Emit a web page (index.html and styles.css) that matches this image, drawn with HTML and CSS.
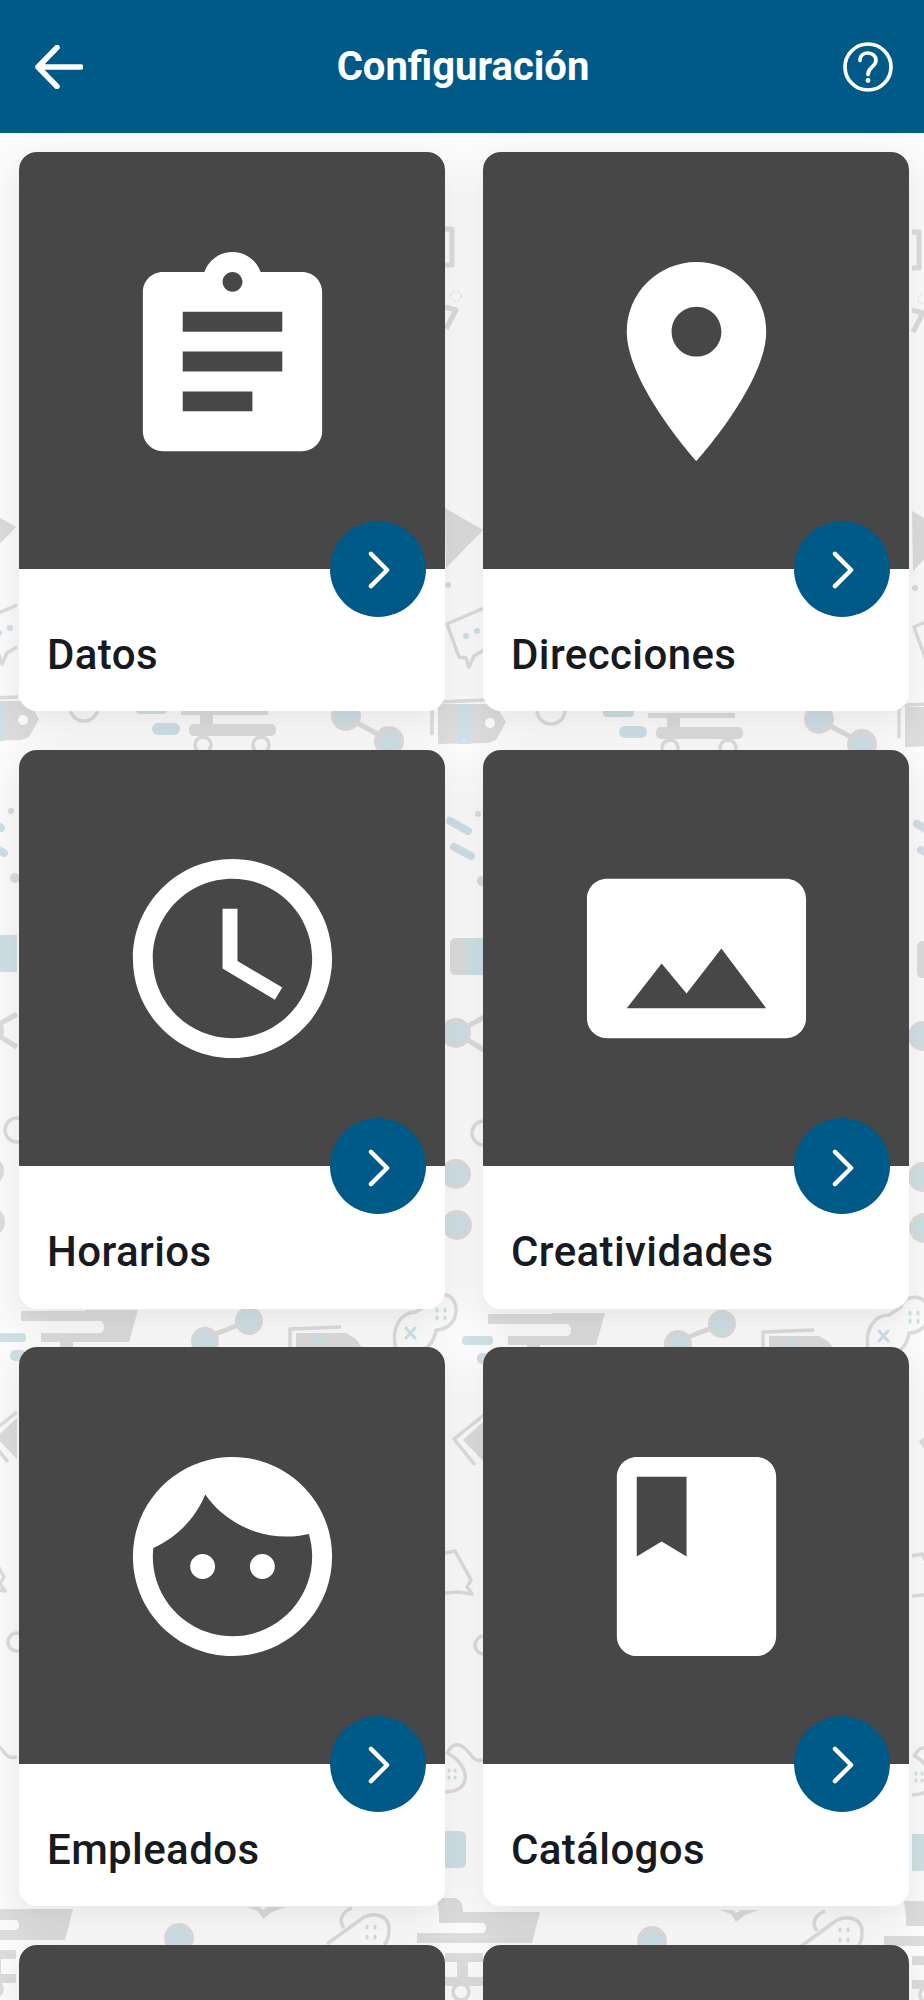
FILE: index.html
```html
<!DOCTYPE html>
<html lang="es">
<head>
  <meta charset="UTF-8" />
  <meta name="viewport" content="width=device-width, initial-scale=1.0" />
  <title>Configuración</title>
  <link rel="stylesheet" href="styles.css">
</head>
<body>
  <!-- Fondo decorativo -->
  <svg class="pattern" viewBox="0 0 924 2000" aria-hidden="true">
    <defs>
      <g id="doodles">
        <g class="fill">
          <path d="M445 508l38 22-37 38z" />
          <circle cx="448" cy="585" r="3" />
          <path d="M438 704h50l9 3 9 15-10 18-8 3-50 1z" />
          <path d="M181 710h87v5h-87zM200 714h13v10h-13z" />
          <rect x="189" y="724" width="87" height="12" rx="5" />
          <circle cx="478" cy="814" r="3" />
          <circle cx="482" cy="881" r="5" />
          <path d="M466 938h-10q-6 0-6 6v25q0 6 6 6h10z" />
          <path d="M21 1311h64v-1h53l-9 32H41v-9h58q5 0 5-6t-5-6H21zM60 1342h13v9H60z" />
          <path d="M484 1421l-21 19 21 22z" />
          <path d="M437 1898h16q10 0 10 14h77l-8 31H417v-10h65q4 0 4-5t-4-5h-43v-10z" />
          <path d="M445 1953h38v9h-15v15h15v9h-38v-9h12v-15h-12z" />
        </g>
        <g class="tint">
          <path d="M458 704h13v40h-13z" />
          <rect x="136" y="705" width="31" height="9" rx="4" />
          <rect x="152" y="723" width="28" height="12" rx="6" />
          <path d="M466 938h18v37h-18z" />
          <rect x="462" y="1336" width="31" height="9" rx="4" />
          <rect x="477" y="1353" width="16" height="11" rx="5" />
          <path d="M445 1831h15q6 0 6 6v25q0 6-6 6h-15z" />
          <circle cx="466" cy="636" r="3" />
          <circle cx="477" cy="631" r="3" />
        </g>
        <g class="tint-line">
          <path d="M450 821l18 10M454 847l17 9" />
        </g>
        <g class="line thick">
          <path d="M445 229h7v36h-7M445 307l11 3-10 19" />
          <path d="M456 1033l28-16M456 1033l28 17" />
        </g>
        <g class="line node">
          <circle cx="456" cy="1033" r="13" />
          <circle cx="456" cy="1174" r="13" />
          <circle cx="457" cy="1225" r="13" />
        </g>
        <g class="line">
          <path d="M484 608l-37 16 12 33 7 1 3 9 5-11 10-6" />
          <path d="M432 735v-27q0-6 6-6l47-2" />
          <circle cx="84" cy="707" r="14" />
          <circle cx="203" cy="745" r="8" />
          <circle cx="261" cy="745" r="8" />
          <circle cx="484" cy="1133" r="12" />
          <path d="M484 1415l-30 24 21 26" />
          <path d="M445 1553l10-2 16 29-4 7 5 7-14-2-13 1" />
          <circle cx="484" cy="1645" r="9" />
          <path d="M447 1753c8-14 16-8 23 1s9 6 14 6M446 1752c26 14 26 40-1 40" />
          <circle cx="461" cy="1992" r="8" />
        </g>
        <g class="tint-line thin">
          <path d="M449 1770v1m6-1v1m-6 6v1m6-1v1" />
        </g>
        <circle class="hole" cx="490" cy="723" r="5" />
        <circle class="line dotted" cx="456" cy="296" r="5" />
      </g>
      <g id="doodles-wide">
        <g class="fill">
          <path d="M296 1333h50l10 6 6 9h-66z" />
          <path d="M247 1907h13l3 3 5-3h18l-14 5-9 7-5-8z" />
        </g>
        <circle class="tint" cx="319" cy="1340" r="5" />
        <path class="line thick" d="M346 717l43 23M249 1321l-44 17" />
        <g class="line node">
          <circle cx="346" cy="716" r="13" />
          <circle cx="389" cy="741" r="13" />
          <circle cx="249" cy="1321" r="12" />
          <circle cx="205" cy="1341" r="12" />
          <circle cx="179" cy="1938" r="13" />
        </g>
        <g class="line">
          <path d="M290 1350v-21l51-2" />
          <path d="M396 1350c-6-24 6-38 20-38l12-8c4-14 28-14 28 6 0 16-14 20-20 20-2 14-12 22-20 22" />
          <path d="M327 1944l33-24c8-8 30-8 29 10 0 8-2 12-5 15M344 1928c-6-8-2-16 8-20" />
        </g>
        <g class="tint-line thin">
          <path d="M406 1328l9 10m0-10l-9 10M437 1309v2m8-2v2m-8 6v2m8-2v2M367 1926v2m8-2v2m-8 8v2m8-2v2" />
        </g>
      </g>
    </defs>
    <use href="#doodles" x="-467" y="-3" />
    <use href="#doodles" />
    <use href="#doodles" x="467" y="3" />
    <use href="#doodles-wide" />
    <use href="#doodles-wide" x="473" y="3" />
  </svg>

  <header>
    <a href="#" class="back" aria-label="Volver">
      <svg viewBox="0 0 48 44"><path d="M22 2.5L3 22l19 19.5M3 22h43" /></svg>
    </a>
    <h1>Configuración</h1>
    <a href="#" class="help" aria-label="Ayuda">
      <svg viewBox="0 0 50 50">
        <circle cx="25" cy="25" r="23" />
        <path d="M17 18.500c0-5 3.500-7.500 8-7.500s8 3 8 7.300c0 6.700-8 6.700-8 14.200" />
        <circle class="dot" cx="25" cy="38.500" r="2.400" />
      </svg>
    </a>
  </header>

  <main class="menu">
    <a href="#" class="card">
      <div class="card-image">
        <svg viewBox="0 0 24 24"><path d="M19 3h-4.180C14.400 1.840 13.300 1 12 1c-1.300 0-2.400.840-2.820 2H5c-1.100 0-2 .9-2 2v14c0 1.100.9 2 2 2h14c1.100 0 2-.9 2-2V5c0-1.100-.9-2-2-2zm-7 0c.55 0 1 .45 1 1s-.45 1-1 1-1-.45-1-1 .45-1 1-1zm2 14H7v-2h7v2zm3-4H7v-2h10v2zm0-4H7V7h10v2z" /></svg>
        <span class="go"><svg viewBox="0 0 24 40"><path d="M3 3l17 17L3 37" /></svg></span>
      </div>
      <h2>Datos</h2>
    </a>
    <a href="#" class="card">
      <div class="card-image">
        <svg viewBox="0 0 24 24"><path d="M12 2C8.130 2 5 5.130 5 9c0 5.250 7 13 7 13s7-7.750 7-13c0-3.870-3.130-7-7-7zm0 9.500c-1.380 0-2.500-1.120-2.500-2.500s1.120-2.500 2.500-2.500 2.500 1.120 2.500 2.500-1.120 2.500-2.500 2.500z" /></svg>
        <span class="go"><svg viewBox="0 0 24 40"><path d="M3 3l17 17L3 37" /></svg></span>
      </div>
      <h2>Direcciones</h2>
    </a>
    <a href="#" class="card">
      <div class="card-image">
        <svg viewBox="0 0 24 24"><path d="M11.990 2C6.470 2 2 6.480 2 12s4.470 10 9.990 10C17.520 22 22 17.520 22 12S17.520 2 11.990 2zM12 20c-4.420 0-8-3.580-8-8s3.580-8 8-8 8 3.580 8 8-3.580 8-8 8zm.5-13H11v6l5.250 3.150.75-1.230-4.500-2.670z" /></svg>
        <span class="go"><svg viewBox="0 0 24 40"><path d="M3 3l17 17L3 37" /></svg></span>
      </div>
      <h2>Horarios</h2>
    </a>
    <a href="#" class="card">
      <div class="card-image">
        <svg viewBox="0 0 24 24"><path d="M23 18V6c0-1.100-.9-2-2-2H3c-1.100 0-2 .9-2 2v12c0 1.100.9 2 2 2h18c1.100 0 2-.9 2-2zM8.500 12.500l2.500 3.010L14.500 11l4.500 6H5l3.500-4.500z" /></svg>
        <span class="go"><svg viewBox="0 0 24 40"><path d="M3 3l17 17L3 37" /></svg></span>
      </div>
      <h2>Creatividades</h2>
    </a>
    <a href="#" class="card">
      <div class="card-image">
        <svg viewBox="0 0 24 24"><path d="M9 11.750c-.69 0-1.250.56-1.250 1.250s.56 1.250 1.250 1.250 1.250-.56 1.250-1.250-.56-1.250-1.250-1.250zm6 0c-.69 0-1.250.56-1.250 1.250s.56 1.250 1.250 1.250 1.250-.56 1.250-1.250-.56-1.250-1.250-1.250zM12 2C6.480 2 2 6.480 2 12s4.480 10 10 10 10-4.480 10-10S17.520 2 12 2zm0 18c-4.410 0-8-3.590-8-8 0-.29.02-.58.05-.86 2.360-1.050 4.230-2.980 5.210-5.370C11.070 8.330 14.050 10 17.420 10c.78 0 1.530-.09 2.250-.26.21.71.33 1.470.33 2.260 0 4.410-3.590 8-8 8z" /></svg>
        <span class="go"><svg viewBox="0 0 24 40"><path d="M3 3l17 17L3 37" /></svg></span>
      </div>
      <h2>Empleados</h2>
    </a>
    <a href="#" class="card">
      <div class="card-image">
        <svg viewBox="0 0 24 24"><path d="M18 2H6c-1.100 0-2 .9-2 2v16c0 1.100.9 2 2 2h12c1.100 0 2-.9 2-2V4c0-1.100-.9-2-2-2zM6 4h5v8l-2.500-1.500L6 12V4z" /></svg>
        <span class="go"><svg viewBox="0 0 24 40"><path d="M3 3l17 17L3 37" /></svg></span>
      </div>
      <h2>Catálogos</h2>
    </a>
    <div class="card cut"></div>
    <div class="card cut"></div>
  </main>
</body>
</html>
```
FILE: styles.css
```css
:root {
  --main-color: #005a87;
  --card-dark: #474747;
  --text-dark: #171a20;
  --doodle: #dddddd;
  --doodle-blue: #cfe1e7;
}

* {
  box-sizing: border-box;
  margin: 0;
  padding: 0;
  font-family: Roboto, "Liberation Sans", sans-serif;
}

body {
  position: relative;
  height: 2000px;
  overflow: hidden;
  background: #fcfcfc;
  color: var(--text-dark);
}

/* background */
.pattern {
  position: absolute;
  top: 0;
  left: 0;
  width: 924px;
  height: 2000px;
  z-index: -1;
}
.pattern .fill {
  fill: var(--doodle);
}
.pattern .tint {
  fill: var(--doodle-blue);
}
.pattern .line {
  fill: none;
  stroke: var(--doodle);
  stroke-width: 3.5;
  stroke-linejoin: round;
}
.pattern .thick {
  stroke-width: 5;
}
.pattern .node {
  fill: var(--doodle-blue);
  stroke-width: 4;
}
.pattern .tint-line {
  fill: none;
  stroke: var(--doodle-blue);
  stroke-width: 8;
  stroke-linecap: round;
}
.pattern .thin {
  stroke-width: 3;
}
.pattern .dotted {
  stroke-width: 1;
  stroke-dasharray: 2 2;
}
.pattern .hole {
  fill: #fff;
}

header {
  height: 133px;
  padding: 0 31px 0 35px;
  background: var(--main-color);
  color: #fff;
  display: flex;
  justify-content: space-between;
  align-items: center;
}
header h1 {
  font-size: 40px;
  font-weight: 700;
  line-height: 48px;
}
header svg {
  display: block;
  fill: none;
  stroke: #fff;
  stroke-linecap: round;
  stroke-linejoin: round;
}
.back svg {
  width: 48px;
  height: 44px;
  stroke-width: 5.5;
}
.help svg {
  width: 50px;
  height: 50px;
  stroke-width: 3.7;
}
.help .dot {
  fill: #fff;
  stroke: none;
}

.menu {
  display: grid;
  grid-template-columns: 426px 426px;
  align-content: start;
  gap: 38.7px 38px;
  height: 1867px;
  padding: 19px 15px 0 19px;
  overflow: hidden;
}

.card {
  height: 559px;
  background: #fff;
  border-radius: 18px;
  box-shadow: 0 12px 38px 3px rgba(0, 0, 0, 0.09);
  color: inherit;
  text-decoration: none;
}
.card-image {
  position: relative;
  height: 416.6px;
  padding-top: 2px;
  background: var(--card-dark);
  border-radius: 18px 18px 0 0;
  display: flex;
  align-items: center;
  justify-content: center;
}
.card-image > svg {
  width: 239px;
  height: 239px;
  fill: #fff;
}
.card h2 {
  padding: 61px 28px 0;
  font-size: 42px;
  font-weight: 500;
  line-height: 50px;
  letter-spacing: 0.4px;
}
/* last row, only its top is visible */
.card.cut {
  height: 55px;
  background: var(--card-dark);
  border-radius: 18px 18px 0 0;
}

/* round arrow over the edge of the image */
.go {
  position: absolute;
  right: 19px;
  bottom: -48px;
  width: 96px;
  height: 96px;
  border-radius: 50%;
  background: var(--main-color);
  display: flex;
  align-items: center;
  justify-content: center;
}
.go svg {
  width: 23px;
  height: 38px;
  margin: 3px 0 0 3px;
  fill: none;
  stroke: #fff;
  stroke-width: 4.6;
  stroke-linecap: round;
  stroke-linejoin: round;
}
```
